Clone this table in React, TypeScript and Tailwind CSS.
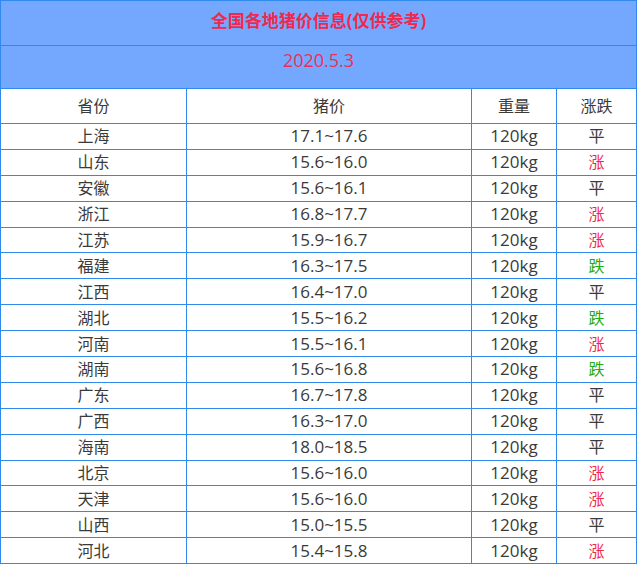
const rows: [string, string, string][] = [
  ['上海', '17.1~17.6', '平'],
  ['山东', '15.6~16.0', '涨'],
  ['安徽', '15.6~16.1', '平'],
  ['浙江', '16.8~17.7', '涨'],
  ['江苏', '15.9~16.7', '涨'],
  ['福建', '16.3~17.5', '跌'],
  ['江西', '16.4~17.0', '平'],
  ['湖北', '15.5~16.2', '跌'],
  ['河南', '15.5~16.1', '涨'],
  ['湖南', '15.6~16.8', '跌'],
  ['广东', '16.7~17.8', '平'],
  ['广西', '16.3~17.0', '平'],
  ['海南', '18.0~18.5', '平'],
  ['北京', '15.6~16.0', '涨'],
  ['天津', '15.6~16.0', '涨'],
  ['山西', '15.0~15.5', '平'],
  ['河北', '15.4~15.8', '涨']
]

const trendColor: Record<string, string> = {
  平: 'text-[#3a3a3a]',
  涨: 'text-[#f0284f]',
  跌: 'text-[#22ac12]'
}

const cell = 'border border-[#3089ec] text-center p-0'

export default function App() {
  return (
    <div className="w-[640px] h-[565px] bg-white overflow-hidden font-['Open_Sans','Noto_Sans_CJK_SC',sans-serif] text-[#3a3a3a]">
      <table className="w-[637px] table-fixed border-collapse border border-[#3089ec]">
        <colgroup>
          <col className="w-[186px]" />
          <col className="w-[285px]" />
          <col className="w-[85px]" />
          <col className="w-[80px]" />
        </colgroup>
        <thead>
          <tr className="h-[45px] bg-[#74a8ff]">
            <th colSpan={4} className={`${cell} text-[17px] font-bold text-[#f0284f] pb-[4px]`}>
              全国各地猪价信息(仅供参考)
            </th>
          </tr>
          <tr className="h-[43px] bg-[#74a8ff]">
            <th colSpan={4} className={`${cell} text-[18px] font-normal text-[#e8305a] pb-[14px]`}>
              2020.5.3
            </th>
          </tr>
          <tr className="h-[35px] text-[16px]">
            <th className={`${cell} font-normal`}>省份</th>
            <th className={`${cell} font-normal`}>猪价</th>
            <th className={`${cell} font-normal`}>重量</th>
            <th className={`${cell} font-normal`}>涨跌</th>
          </tr>
        </thead>
        <tbody className="text-[16px]">
          {rows.map(([prov, price, trend]) => (
            <tr key={prov} className="h-[25.9px]">
              <td className={`${cell} leading-[20px]`}>{prov}</td>
              <td className={`${cell} leading-[20px] text-[17px]`}>{price}</td>
              <td className={`${cell} leading-[20px] text-[17px]`}>120kg</td>
              <td className={`${cell} leading-[20px] ${trendColor[trend]}`}>{trend}</td>
            </tr>
          ))}
        </tbody>
      </table>
    </div>
  )
}
